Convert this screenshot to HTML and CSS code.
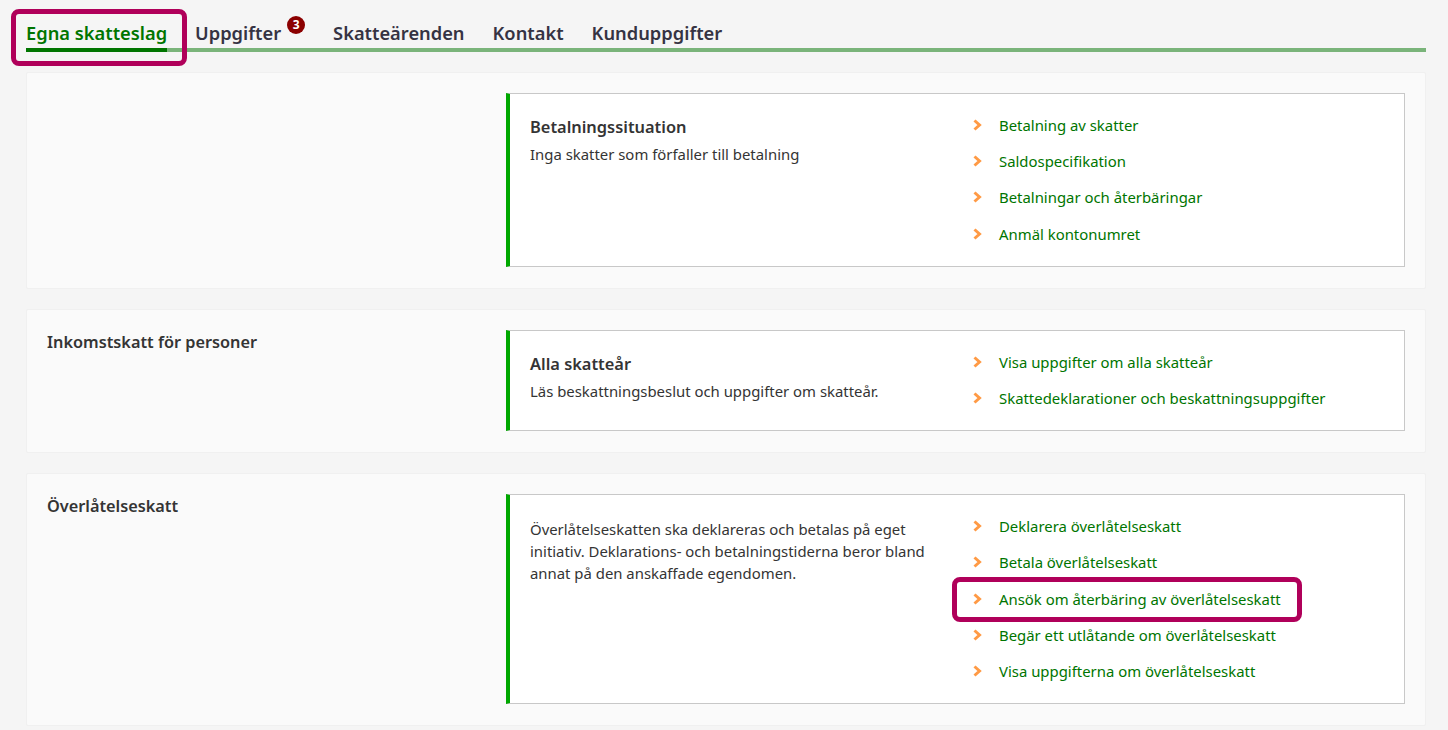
FILE: index.html
```html
<!DOCTYPE html>
<html lang="sv">
<head>
    <meta charset="UTF-8">
    <meta name="viewport" content="width=device-width, initial-scale=1.0">
    <title>Egna skatteslag</title>
    <link rel="stylesheet" href="styles.css">
</head>
<body>
<div class="main">
    <nav class="tabs">
        <a class="tab active">Egna skatteslag</a>
        <a class="tab">Uppgifter<span class="badge">3</span></a>
        <a class="tab">Skatteärenden</a>
        <a class="tab">Kontakt</a>
        <a class="tab">Kunduppgifter</a>
        <div class="mark mark-tab"></div>
    </nav>

    <section class="card">
        <h2 class="card-title"></h2>
        <div class="box">
            <div class="info">
                <h3>Betalningssituation</h3>
                <p>Inga skatter som förfaller till betalning</p>
            </div>
            <ul class="links">
                <li><svg class="chev" viewBox="0 0 9 12"><path d="M1.5 1.5 6.5 6 1.5 10.5"/></svg><a>Betalning av skatter</a></li>
                <li><svg class="chev" viewBox="0 0 9 12"><path d="M1.5 1.5 6.5 6 1.5 10.5"/></svg><a>Saldospecifikation</a></li>
                <li><svg class="chev" viewBox="0 0 9 12"><path d="M1.5 1.5 6.5 6 1.5 10.5"/></svg><a>Betalningar och återbäringar</a></li>
                <li><svg class="chev" viewBox="0 0 9 12"><path d="M1.5 1.5 6.5 6 1.5 10.5"/></svg><a>Anmäl kontonumret</a></li>
            </ul>
        </div>
    </section>

    <section class="card">
        <h2 class="card-title">Inkomstskatt för personer</h2>
        <div class="box">
            <div class="info">
                <h3>Alla skatteår</h3>
                <p>Läs beskattningsbeslut och uppgifter om skatteår.</p>
            </div>
            <ul class="links">
                <li><svg class="chev" viewBox="0 0 9 12"><path d="M1.5 1.5 6.5 6 1.5 10.5"/></svg><a>Visa uppgifter om alla skatteår</a></li>
                <li><svg class="chev" viewBox="0 0 9 12"><path d="M1.5 1.5 6.5 6 1.5 10.5"/></svg><a>Skattedeklarationer och beskattningsuppgifter</a></li>
            </ul>
        </div>
    </section>

    <section class="card">
        <h2 class="card-title">Överlåtelseskatt</h2>
        <div class="box">
            <div class="info">
                <p class="lead">Överlåtelseskatten ska deklareras och betalas på eget initiativ. Deklarations- och betalningstiderna beror bland annat på den anskaffade egendomen.</p>
            </div>
            <ul class="links">
                <li><svg class="chev" viewBox="0 0 9 12"><path d="M1.5 1.5 6.5 6 1.5 10.5"/></svg><a>Deklarera överlåtelseskatt</a></li>
                <li><svg class="chev" viewBox="0 0 9 12"><path d="M1.5 1.5 6.5 6 1.5 10.5"/></svg><a>Betala överlåtelseskatt</a></li>
                <li><svg class="chev" viewBox="0 0 9 12"><path d="M1.5 1.5 6.5 6 1.5 10.5"/></svg><a>Ansök om återbäring av överlåtelseskatt</a><div class="mark mark-link"></div></li>
                <li><svg class="chev" viewBox="0 0 9 12"><path d="M1.5 1.5 6.5 6 1.5 10.5"/></svg><a>Begär ett utlåtande om överlåtelseskatt</a></li>
                <li><svg class="chev" viewBox="0 0 9 12"><path d="M1.5 1.5 6.5 6 1.5 10.5"/></svg><a>Visa uppgifterna om överlåtelseskatt</a></li>
            </ul>
        </div>
    </section>
</div>
</body>
</html>
```

FILE: styles.css
```css
* {
    margin: 0;
    padding: 0;
    box-sizing: border-box;
}

body {
    background-color: #f5f5f5;
    color: #343434;
    font-family: "Noto Sans", "Open Sans", sans-serif;
    font-size: 14.9px;
    overflow: hidden;
}

.main {
    padding: 0 22px 0 26px;
    height: 730px;
}

/* tabs */
.tabs {
    position: relative;
    display: flex;
    gap: 28px;
    height: 52px;
    padding-top: 19px;
    border-bottom: 4px solid #7ab47a;
    margin-bottom: 20px;
}

.tab {
    height: 33px;
    font-size: 18.3px;
    font-weight: 600;
    line-height: 28px;
    color: #353343;
}

.tab.active {
    color: #007500;
    border-bottom: 4px solid #007500;
}

.badge {
    display: inline-block;
    vertical-align: top;
    width: 18px;
    height: 18px;
    margin-left: 6px;
    margin-top: -3px;
    border-radius: 50%;
    background-color: #8b0000;
    color: #fff;
    font-size: 12px;
    font-weight: 700;
    line-height: 18px;
    text-align: center;
}

/* cards */
.card {
    display: flex;
    background-color: #fafafa;
    border: 1px solid #f0f0f0;
    border-radius: 2px;
    padding: 20px 20px 21px;
    margin-bottom: 20px;
}

.card-title {
    width: 459px;
    flex-shrink: 0;
    font-size: 16.3px;
    font-weight: 600;
    line-height: 24px;
}

.box {
    flex: 1;
    display: flex;
    background-color: #fff;
    border: 1px solid #c8c8c8;
    border-left: 4px solid #00a800;
    padding: 15px 0 11.4px;
}

.info {
    width: 462px;
    flex-shrink: 0;
    padding: 6px 20px 0;
}

.info h3 {
    font-size: 16.4px;
    font-weight: 600;
    line-height: 24px;
    margin-bottom: 4px;
}

.info p {
    line-height: 22px;
}

.info .lead {
    padding-top: 2px;
}

/* links */
.links {
    list-style: none;
}

.links li {
    position: relative;
    display: flex;
    align-items: center;
    height: 36.4px;
    padding-bottom: 5px;
}

.links a {
    color: #007500;
    line-height: 22px;
}

.chev {
    width: 9px;
    height: 12px;
    margin-left: 1px;
    margin-right: 17px;
    fill: none;
    stroke: #ff9a45;
    stroke-width: 3;
}

/* highlight frames drawn over the page */
.mark {
    position: absolute;
    border: 5px solid #b0005a;
    border-radius: 8px;
    pointer-events: none;
}

.mark-tab {
    left: -15px;
    top: 9px;
    width: 176px;
    height: 57px;
}

.mark-link {
    left: -20px;
    top: -6px;
    width: 350px;
    height: 45px;
}
```
